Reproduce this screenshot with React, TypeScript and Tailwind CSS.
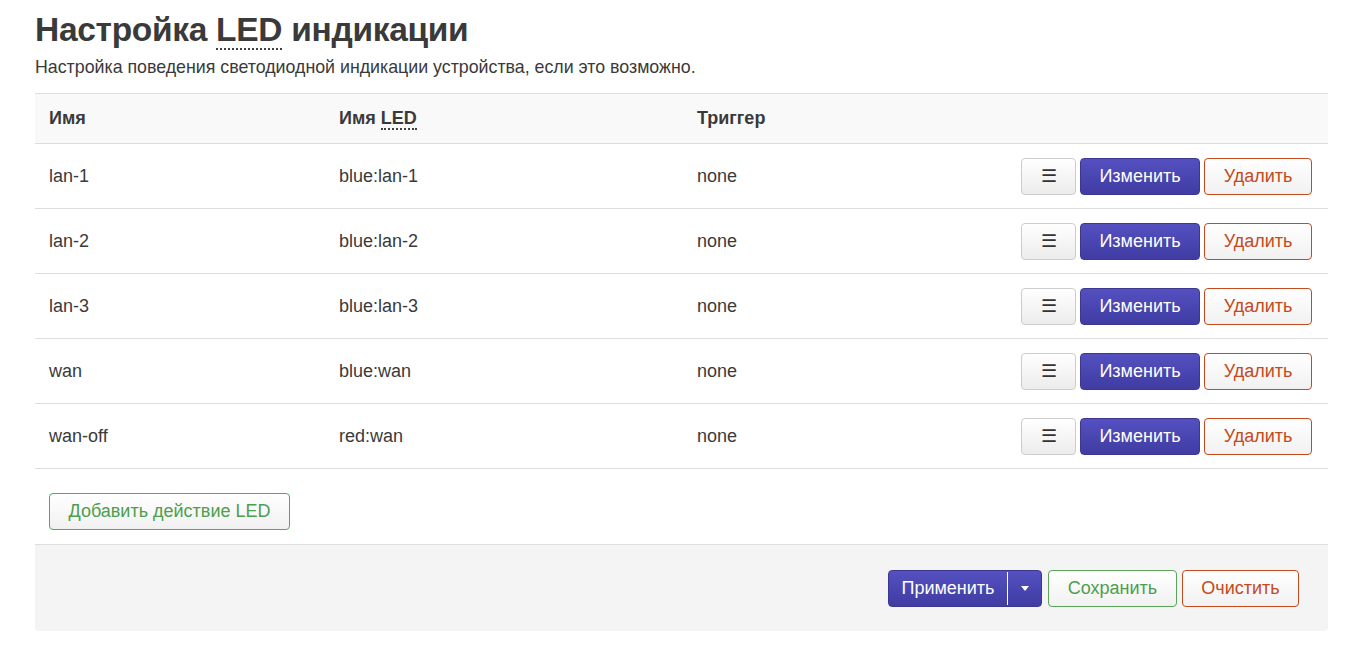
import React from 'react';

const rows = [
  { name: 'lan-1', led: 'blue:lan-1', trigger: 'none' },
  { name: 'lan-2', led: 'blue:lan-2', trigger: 'none' },
  { name: 'lan-3', led: 'blue:lan-3', trigger: 'none' },
  { name: 'wan', led: 'blue:wan', trigger: 'none' },
  { name: 'wan-off', led: 'red:wan', trigger: 'none' },
];

const Abbr = ({ children }: { children: React.ReactNode }) => (
  <abbr className="no-underline border-b-2 border-dotted border-[#404040] leading-none">{children}</abbr>
);

const btnBase =
  'h-[37px] rounded-[4px] border text-[18px] flex items-center justify-center';

export default function App() {
  return (
    <div
      className="min-h-screen bg-white text-[#3a3a3a] pl-[35px] pr-[44px] pt-[10px]"
      style={{ fontFamily: '"Liberation Sans", Arial, sans-serif' }}
    >
      <h2 className="text-[33.5px] font-bold leading-[40px] tracking-[-0.3px]">
        Настройка <Abbr>LED</Abbr> индикации
      </h2>
      <p className="text-[17.8px] mt-[5px] leading-[24px]">
        Настройка поведения светодиодной индикации устройства, если это возможно.
      </p>

      <div className="mt-[14px]">
        <div className="flex h-[51px] items-center bg-[#f9f9f9] border-y border-[#dddddd] font-bold text-[18px]">
          <div className="w-[290px] pl-[14px]">Имя</div>
          <div className="w-[358px] pl-[14px]">
            Имя <Abbr>LED</Abbr>
          </div>
          <div className="pl-[14px]">Триггер</div>
        </div>
        {rows.map((r) => (
          <div
            key={r.name}
            className="flex h-[65px] items-center border-b border-[#dddddd] text-[18px]"
          >
            <div className="w-[290px] pl-[14px]">{r.name}</div>
            <div className="w-[358px] pl-[14px]">{r.led}</div>
            <div className="pl-[14px] flex-1">{r.trigger}</div>
            <div className="flex gap-[4px] pr-[16px]">
              <button className={`${btnBase} w-[55px] border-[#cccccc] bg-gradient-to-b from-white to-[#ececec] text-[#333]`}>
                ☰
              </button>
              <button className={`${btnBase} w-[120px] border-[#3c378f] bg-gradient-to-b from-[#5450c0] to-[#403ca3] text-white`}>
                Изменить
              </button>
              <button className={`${btnBase} w-[108px] border-[#c44a1d] bg-gradient-to-b from-white to-[#f1f1f1] text-[#c44a1d]`}>
                Удалить
              </button>
            </div>
          </div>
        ))}
      </div>

      <div className="pt-[24px] pb-[14px] pl-[14px] border-b border-[#dddddd]">
        <button className={`${btnBase} w-[241px] border-[#5aa55a] bg-gradient-to-b from-white to-[#f1f1f1] text-[#4e9e4e]`}>
          Добавить действие LED
        </button>
      </div>

      <div className="bg-[#f4f4f4] rounded-b-[4px] h-[86px] flex items-center justify-end pr-[29px] gap-[5px]">
        <div className="flex h-[37px] rounded-[4px] border border-[#3c378f] bg-gradient-to-b from-[#5450c0] to-[#403ca3] text-white text-[18px] overflow-hidden">
          <button className="w-[118px] flex items-center justify-center">Применить</button>
          <div className="w-px bg-white my-[1px]" />
          <button className="w-[33px] flex items-center justify-center">
            <svg width="8" height="5" viewBox="0 0 8 5"><path d="M0 0h8L4 5z" fill="white" /></svg>
          </button>
        </div>
        <button className={`${btnBase} w-[129px] ml-[1px] border-[#5aa55a] bg-gradient-to-b from-white to-[#f1f1f1] text-[#4e9e4e]`}>
          Сохранить
        </button>
        <button className={`${btnBase} w-[117px] border-[#c44a1d] bg-gradient-to-b from-white to-[#f1f1f1] text-[#c44a1d]`}>
          Очистить
        </button>
      </div>
    </div>
  );
}
